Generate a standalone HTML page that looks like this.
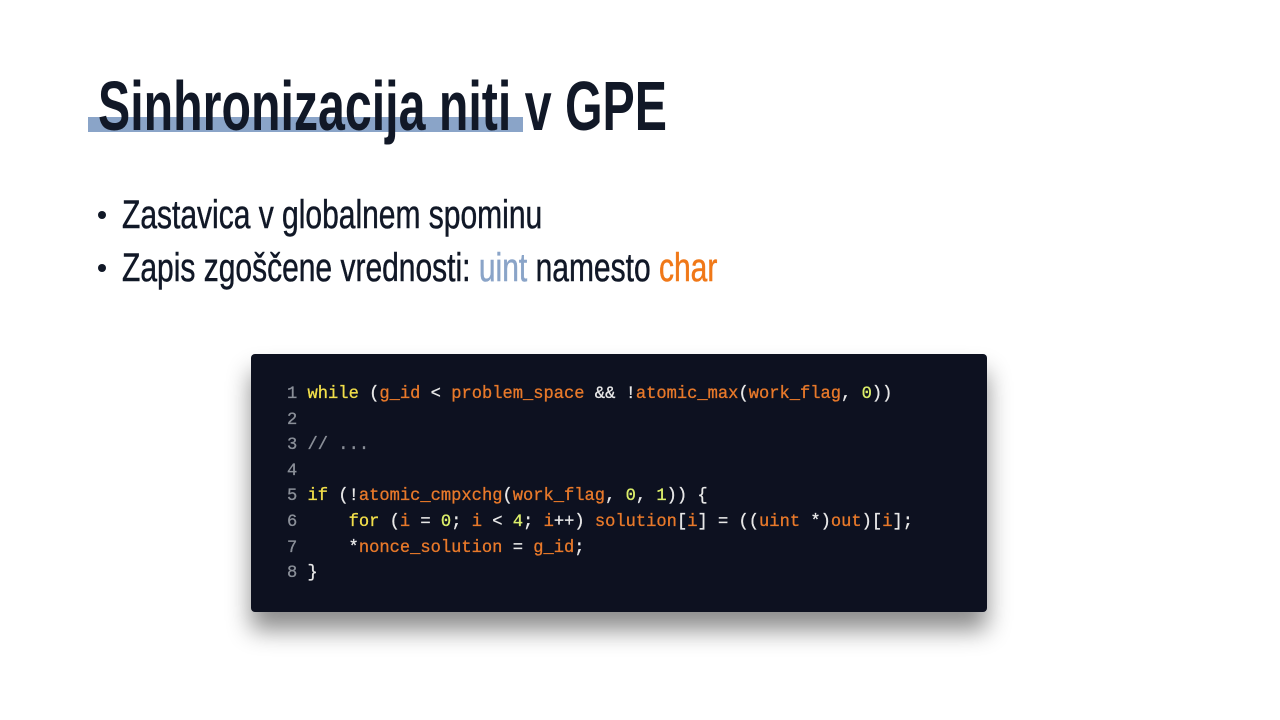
<!DOCTYPE html>
<html><head><meta charset="utf-8"><style>
html,body{margin:0;padding:0;background:#fff;width:1280px;height:720px;overflow:hidden;position:relative;font-family:"Liberation Sans",sans-serif}
.bar{position:absolute;left:88px;top:117px;width:435px;height:15px;background:#8aa4c8}
.title{position:absolute;left:98px;top:66px;font-size:70px;font-weight:bold;color:#111827;white-space:nowrap;transform:scaleX(0.69);transform-origin:left top;line-height:80px}
.b{position:absolute;left:98px;font-size:40px;color:#111827;white-space:nowrap;line-height:46px}
.b span.t{display:inline-block;transform:scaleX(0.75);transform-origin:left top;position:absolute;left:24px;top:0;-webkit-text-stroke:0.5px #111827}
.b span.t span{-webkit-text-stroke:0.5px currentColor}
.dot{position:absolute;left:0;top:19px;width:8px;height:8px;border-radius:50%;background:#111827}
.code{position:absolute;left:251px;top:354px;width:736px;height:258px;background:#0d1120;border-radius:4px;box-shadow:0 18px 24px rgba(0,0,0,0.45)}
pre{margin:0;position:absolute;left:36px;top:28px;font-family:"Liberation Mono","DejaVu Sans Mono",monospace;font-size:17.1px;line-height:25.6px;color:#e8e8e8;-webkit-text-stroke:0.3px currentColor}
.n{color:#8a8f98}.k{color:#f2df4a}.o{color:#e8792a}.d{color:#dcef6a}
</style></head><body>
<div class="bar"></div>
<div class="title">Sinhronizacija niti v GPE</div>
<div class="b" style="top:192px"><div class="dot"></div><span class="t">Zastavica v globalnem spominu</span></div>
<div class="b" style="top:245px"><div class="dot"></div><span class="t">Zapis zgoščene vrednosti: <span style="color:#8aa4c8">uint</span> namesto <span style="color:#f07818">char</span></span></div>
<div class="code"><pre><span class="n">1</span> <span class="k">while</span> (<span class="o">g_id</span> &lt; <span class="o">problem_space</span> &amp;&amp; !<span class="o">atomic_max</span>(<span class="o">work_flag</span>, <span class="d">0</span>))
<span class="n">2</span>
<span class="n">3</span> <span class="n">// ...</span>
<span class="n">4</span>
<span class="n">5</span> <span class="k">if</span> (!<span class="o">atomic_cmpxchg</span>(<span class="o">work_flag</span>, <span class="d">0</span>, <span class="d">1</span>)) {
<span class="n">6</span>     <span class="k">for</span> (<span class="o">i</span> = <span class="d">0</span>; <span class="o">i</span> &lt; <span class="d">4</span>; <span class="o">i</span>++) <span class="o">solution</span>[<span class="o">i</span>] = ((<span class="o">uint</span> *)<span class="o">out</span>)[<span class="o">i</span>];
<span class="n">7</span>     *<span class="o">nonce_solution</span> = <span class="o">g_id</span>;
<span class="n">8</span> }</pre></div>
</body></html>
